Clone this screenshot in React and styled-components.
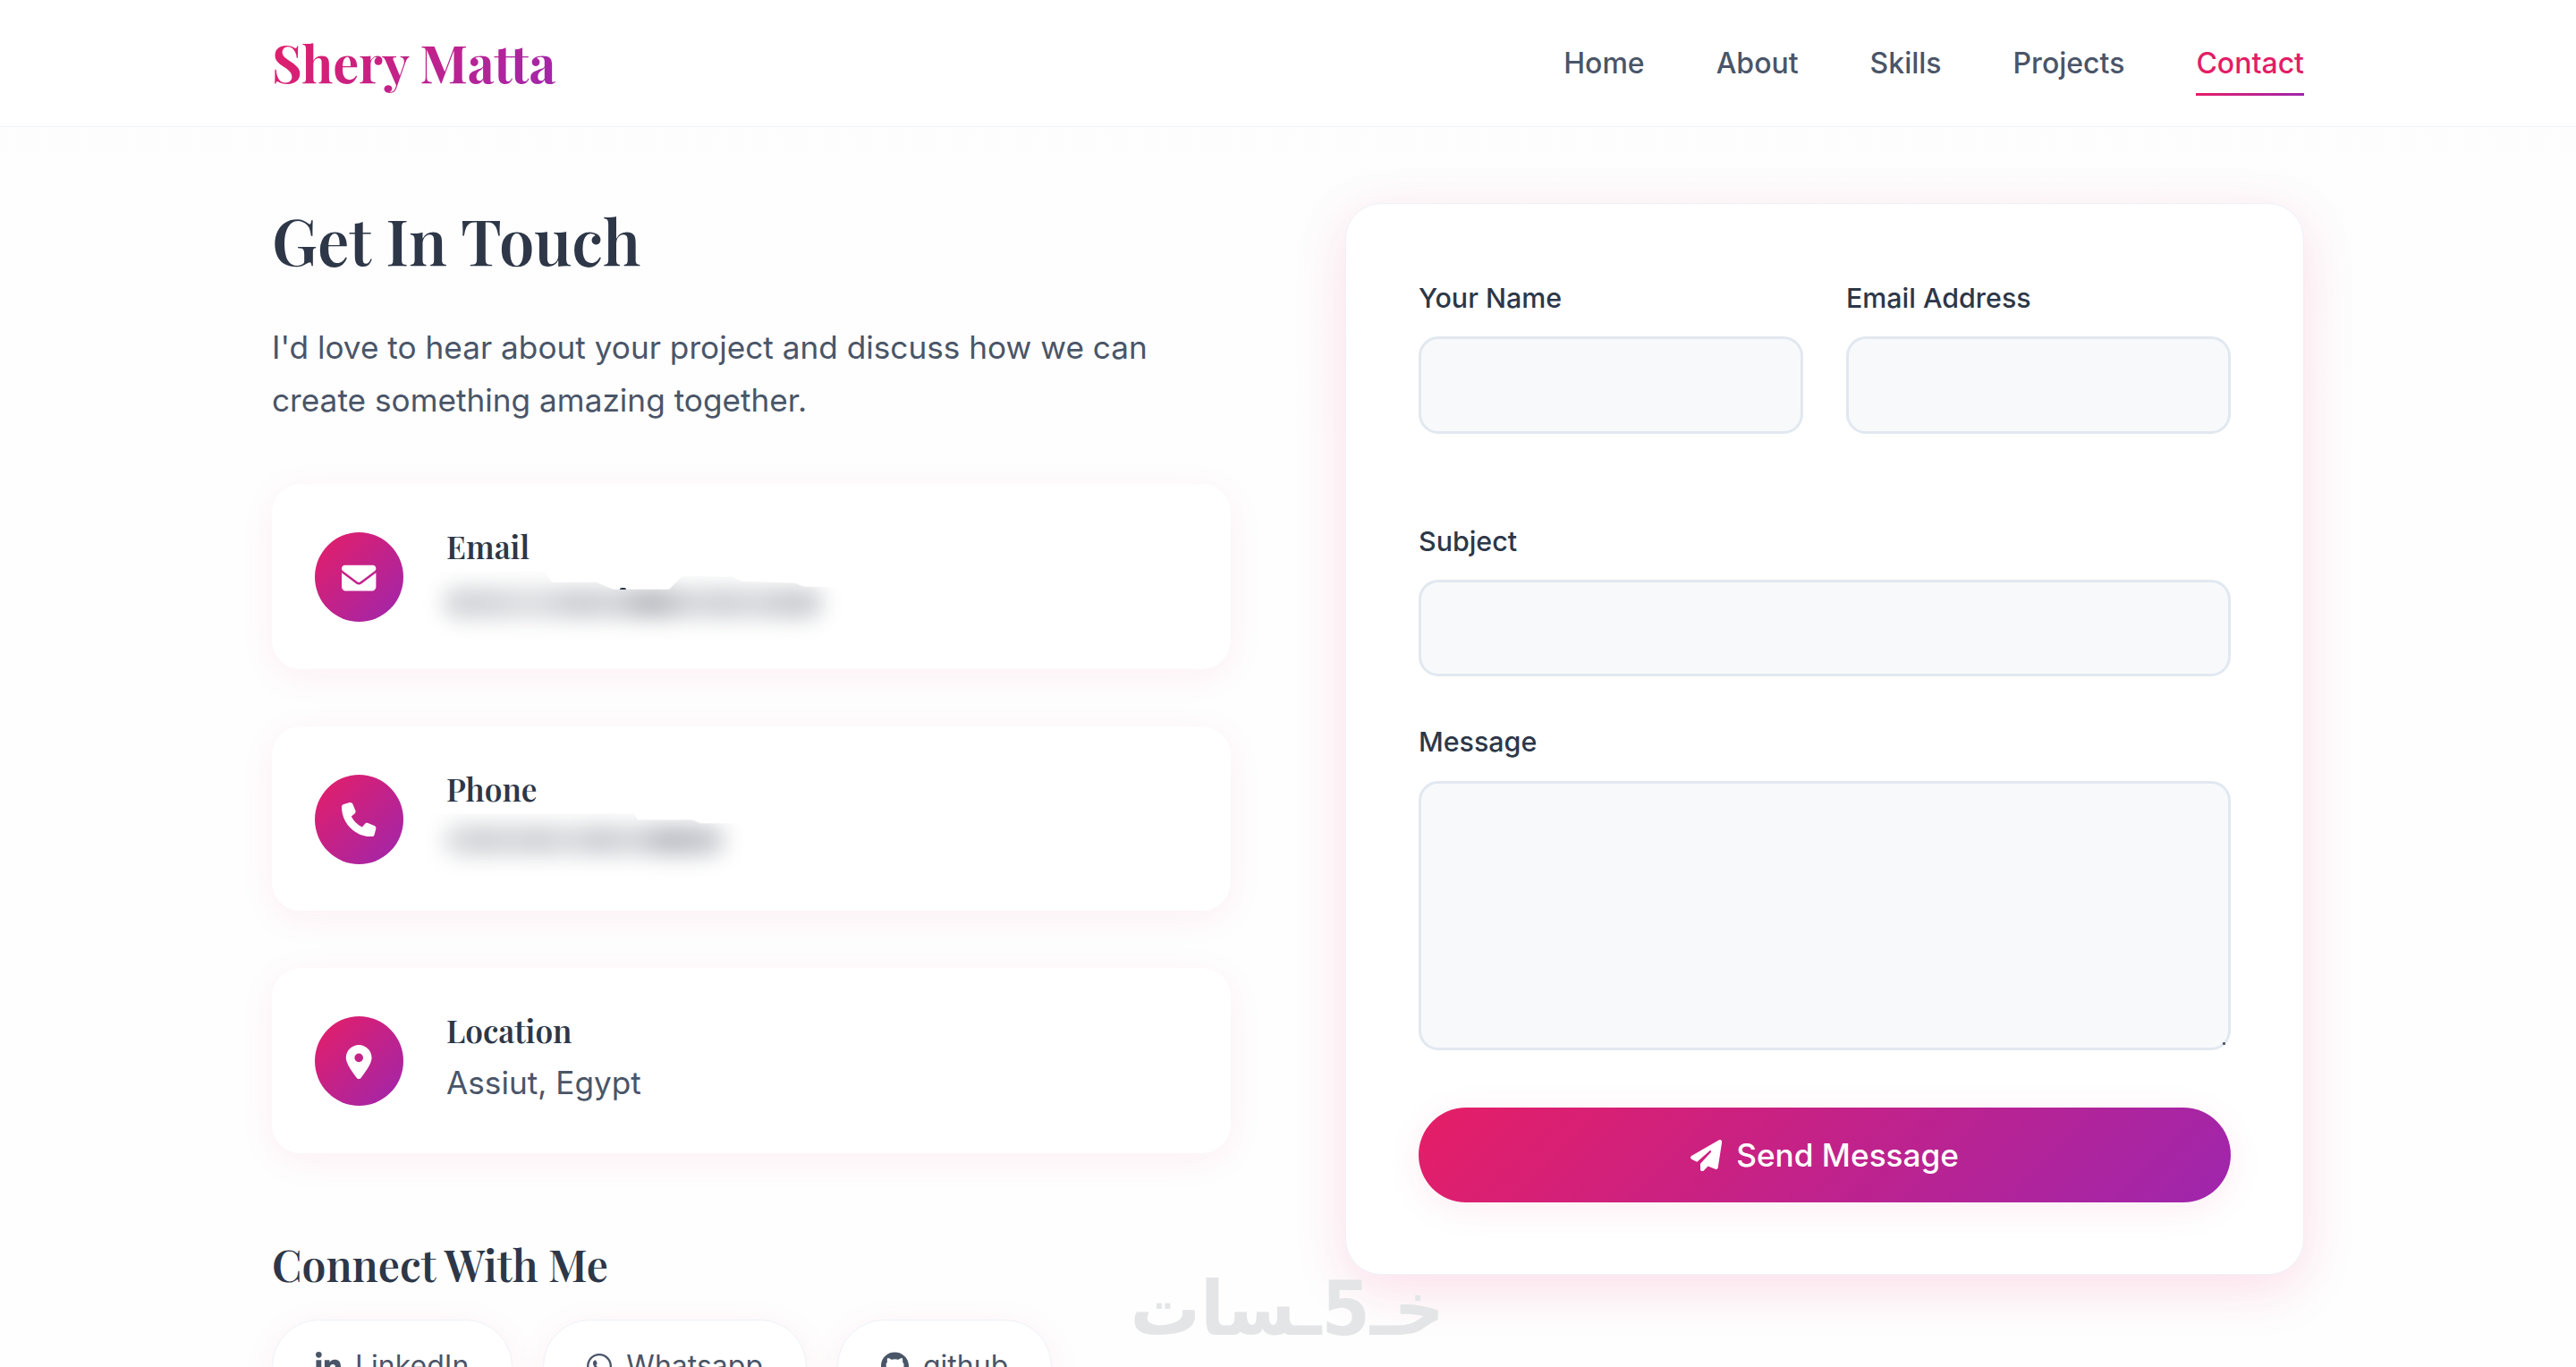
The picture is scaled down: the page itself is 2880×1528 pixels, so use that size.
import React from "react";
import styled, { createGlobalStyle, css } from "styled-components";
import {
  FaEnvelope,
  FaPhone,
  FaLocationDot,
  FaPaperPlane,
  FaLinkedinIn,
  FaWhatsapp,
  FaGithub,
} from "react-icons/fa6";

const colors = {
  heading: "#2d3748",
  text: "#4a5568",
  accent: "#e31d66",
  line: "#edf2f7",
  field: "#f7f9fb",
  fieldBorder: "#e2e8f0",
};
const gradient = "linear-gradient(135deg, #e61e66 0%, #9e26ad 100%)";
const serif = '"Playfair Display", "Liberation Serif", serif';

const GlobalStyle = createGlobalStyle`
  *, *::before, *::after { box-sizing: border-box; }
  body {
    margin: 0;
    background: #fefefe;
    color: ${colors.text};
    font-family: Inter, "Liberation Sans", sans-serif;
    font-size: 32px;
    line-height: 1.7;
  }
  h1, h2, h3, h4, p { margin: 0; }
`;

const Page = styled.div`
  position: relative;
  height: 1528px;
  overflow: hidden;
  background: linear-gradient(180deg, #fdfdfd 0, #fefefe 500px);
`;

const Header = styled.header`
  height: 142px;
  background: #fff;
  border-bottom: 1px solid ${colors.line};
`;

const container = css`
  width: 2272px;
  margin: 0 auto;
`;

const HeaderInner = styled.div`
  ${container}
  height: 100%;
  display: flex;
  align-items: center;
  justify-content: space-between;
`;

const Logo = styled.a`
  margin-bottom: 3px;
  font: 700 57.6px/84px ${serif};
  background: ${gradient};
  background-clip: text;
  -webkit-background-clip: text;
  color: transparent;
`;

const Nav = styled.nav`
  display: flex;
  gap: 80px;
`;

const NavLink = styled.a`
  position: relative;
  font-weight: 500;
  line-height: 54px;
  color: ${(p) => (p.$active ? colors.accent : colors.text)};
  ${(p) =>
    p.$active &&
    css`
      &::after {
        content: "";
        position: absolute;
        left: 0;
        right: 0;
        bottom: -9px;
        height: 3px;
        background: ${gradient};
      }
    `}
`;

const Contact = styled.main`
  ${container}
  padding-top: 84.7px;
  display: grid;
  grid-template-columns: 1fr 1fr;
  gap: 128px;
  align-items: start;
`;

const Title = styled.h2`
  margin-bottom: 48.9px;
  font: 600 70.4px/83.1px ${serif};
  color: ${colors.heading};
`;

const Intro = styled.p`
  margin-bottom: 63.6px;
  font-size: 35.2px;
  line-height: 59.6px;
`;

const InfoList = styled.div`
  display: flex;
  flex-direction: column;
  gap: 64px;
`;

const InfoCard = styled.article`
  display: flex;
  align-items: center;
  gap: 48px;
  height: 206.5px;
  padding: 48px;
  border-radius: 32px;
  background: #fff;
  box-shadow: 0 8px 40px rgba(233, 30, 99, 0.065);
`;

const InfoIcon = styled.span`
  flex: none;
  display: flex;
  align-items: center;
  justify-content: center;
  width: 99px;
  height: 100px;
  margin-top: 1px;
  border-radius: 50%;
  background: ${gradient};
  color: #fff;
  svg {
    width: 38.4px;
    height: 38.4px;
    margin-top: 1px;
  }
`;

const InfoLabel = styled.h3`
  margin-bottom: 7.4px;
  font: 600 35.2px/43px ${serif};
  color: ${colors.heading};
`;

const InfoValue = styled.div`
  position: relative;
  height: 60.1px;
  font-size: 35.2px;
  line-height: 59px;
`;

const Concealed = styled.span`
  position: absolute;
  left: -40px;
  top: -1px;
  width: 500px;
  height: 90px;
  clip-path: polygon(${(p) => p.$outline});
  &::before {
    content: "";
    position: absolute;
    left: 35px;
    top: ${(p) => p.$top}px;
    width: ${(p) => p.$width}px;
    height: 38px;
    border-radius: 18px;
    background: ${(p) => p.$spots}, ${(p) => p.$base};
    filter: blur(11px);
  }
`;

const Speck = styled.span`
  position: absolute;
  left: 194px;
  top: 17px;
  width: 7px;
  height: 2px;
  border-radius: 2px 2px 0 0;
  background: ${colors.heading};
`;

const SocialTitle = styled.h3`
  margin: 95.6px 0 32.6px;
  font: 600 48px/57.6px ${serif};
  color: ${colors.heading};
`;

const SocialLinks = styled.div`
  display: flex;
  gap: 34px;
`;

const SocialLink = styled.a`
  display: flex;
  align-items: center;
  gap: 16px;
  height: 105.4px;
  padding: 0 48px;
  border: 1px solid ${colors.line};
  border-radius: 100px;
  background: #fff;
  box-shadow: 0 8px 40px rgba(233, 30, 99, 0.065);
  svg {
    flex: none;
    width: ${(p) => p.$icon}px;
    height: 32px;
  }
`;

const Form = styled.form`
  margin-top: 0.8px;
  padding: 80px 81px;
  border: 1px solid ${colors.line};
  border-radius: 40px;
  background: #fff;
  box-shadow: 0 16px 60px rgba(233, 30, 99, 0.14);
`;

const FieldRow = styled.div`
  display: grid;
  grid-template-columns: 1fr 1fr;
  gap: 48px;
  margin-bottom: 95.4px;
`;

const Field = styled.div`
  position: relative;
  display: flex;
  flex-direction: column;
  gap: ${(p) => p.$gap || 15.8}px;
  margin-bottom: ${(p) => p.$after || 0}px;
`;

const Label = styled.label`
  font-size: 30.4px;
  font-weight: 500;
  line-height: 51.68px;
  color: ${colors.heading};
`;

const control = css`
  display: block;
  width: 100%;
  padding: 24px 32px;
  border: 3px solid ${colors.fieldBorder};
  border-radius: 22px;
  outline: none;
  background: ${colors.field};
  color: ${colors.heading};
  font: 400 32px Inter, sans-serif;
`;

const Input = styled.input`
  ${control}
  height: 108.8px;
`;

const TextArea = styled.textarea`
  ${control}
  height: 300.4px;
  resize: none;
`;

const ResizeMark = styled.span`
  position: absolute;
  right: 6px;
  bottom: 6px;
  width: 3px;
  height: 3px;
  border-radius: 1px;
  background: ${colors.text};
`;

const Submit = styled.button`
  display: flex;
  align-items: center;
  justify-content: center;
  gap: 16px;
  width: 100%;
  height: 105.6px;
  border: 0;
  border-radius: 100px;
  background: ${gradient};
  color: #fff;
  font: 500 35.2px Inter, sans-serif;
  box-shadow: 0 8px 40px rgba(233, 30, 99, 0.08);
  svg {
    width: 35.2px;
    height: 35.2px;
  }
`;

const Watermark = styled.div`
  position: absolute;
  right: 1265px;
  top: 1414px;
  display: flex;
  direction: rtl;
  font: 700 84px/98px "DejaVu Sans", sans-serif;
  color: #e3e5e6;
  transform: scaleX(0.93);
  transform-origin: right;
`;

const navItems = ["Home", "About", "Skills", "Projects", "Contact"];

const spot = (x, color) =>
  `radial-gradient(ellipse 52px 34px at ${x}px 50%, ${color}, transparent)`;

const emailSpots = [
  spot(38, "#d2d4d8"),
  spot(158, "#cbcdd2"),
  spot(234, "#b4b6bb"),
  spot(314, "#d0d2d6"),
  spot(392, "#c9cbd0"),
].join(",");

const phoneSpots = [
  spot(46, "#cdcfd3"),
  spot(107, "#cdcfd3"),
  spot(179, "#c9cbd0"),
  spot(252, "#b9bbc2"),
  spot(287, "#c5c7cc"),
].join(",");

const emailOutline =
  "0 0, 150px 0, 158px 12px, 208px 12px, 226px 20px, 289px 20px, 304px 5px, 360px 6px, 370px 11px, 430px 13px, 440px 17px, 500px 18px, 500px 90px, 0 90px";
const phoneOutline =
  "0 0, 250px 0, 254px 7px, 315px 7px, 324px 11px, 500px 11px, 500px 90px, 0 90px";

export default function App() {
  return (
    <Page>
      <GlobalStyle />
      <Header>
        <HeaderInner>
          <Logo>Shery Matta</Logo>
          <Nav>
            {navItems.map((item) => (
              <NavLink key={item} $active={item === "Contact"}>
                {item}
              </NavLink>
            ))}
          </Nav>
        </HeaderInner>
      </Header>

      <Contact>
        <section>
          <Title>Get In Touch</Title>
          <Intro>
            I'd love to hear about your project and discuss how we can create
            something amazing together.
          </Intro>
          <InfoList>
            <InfoCard>
              <InfoIcon>
                <FaEnvelope />
              </InfoIcon>
              <div>
                <InfoLabel>Email</InfoLabel>
                <InfoValue>
                  <Concealed
                    $top={16}
                    $width={427}
                    $base="#dfe0e3"
                    $spots={emailSpots}
                    $outline={emailOutline}
                  />
                  <Speck />
                </InfoValue>
              </div>
            </InfoCard>
            <InfoCard>
              <InfoIcon>
                <FaPhone />
              </InfoIcon>
              <div>
                <InfoLabel>Phone</InfoLabel>
                <InfoValue>
                  <Concealed
                    $top={11}
                    $width={318}
                    $base="#e8e9eb"
                    $spots={phoneSpots}
                    $outline={phoneOutline}
                  />
                </InfoValue>
              </div>
            </InfoCard>
            <InfoCard>
              <InfoIcon>
                <FaLocationDot />
              </InfoIcon>
              <div>
                <InfoLabel>Location</InfoLabel>
                <InfoValue>Assiut, Egypt</InfoValue>
              </div>
            </InfoCard>
          </InfoList>
          <SocialTitle>Connect With Me</SocialTitle>
          <SocialLinks>
            <SocialLink $icon={28}>
              <FaLinkedinIn />
              LinkedIn
            </SocialLink>
            <SocialLink $icon={28}>
              <FaWhatsapp />
              Whatsapp
            </SocialLink>
            <SocialLink $icon={31}>
              <FaGithub />
              github
            </SocialLink>
          </SocialLinks>
        </section>

        <Form>
          <FieldRow>
            <Field>
              <Label htmlFor="name">Your Name</Label>
              <Input id="name" />
            </Field>
            <Field>
              <Label htmlFor="email">Email Address</Label>
              <Input id="email" />
            </Field>
          </FieldRow>
          <Field $after={47.4}>
            <Label htmlFor="subject">Subject</Label>
            <Input id="subject" />
          </Field>
          <Field $gap={17.9} $after={64.6}>
            <Label htmlFor="message">Message</Label>
            <TextArea id="message" />
            <ResizeMark />
          </Field>
          <Submit type="button">
            <FaPaperPlane />
            Send Message
          </Submit>
        </Form>
      </Contact>

      <Watermark>
        <span>خـ</span>
        <span>5</span>
        <span>ـسات</span>
      </Watermark>
    </Page>
  );
}
